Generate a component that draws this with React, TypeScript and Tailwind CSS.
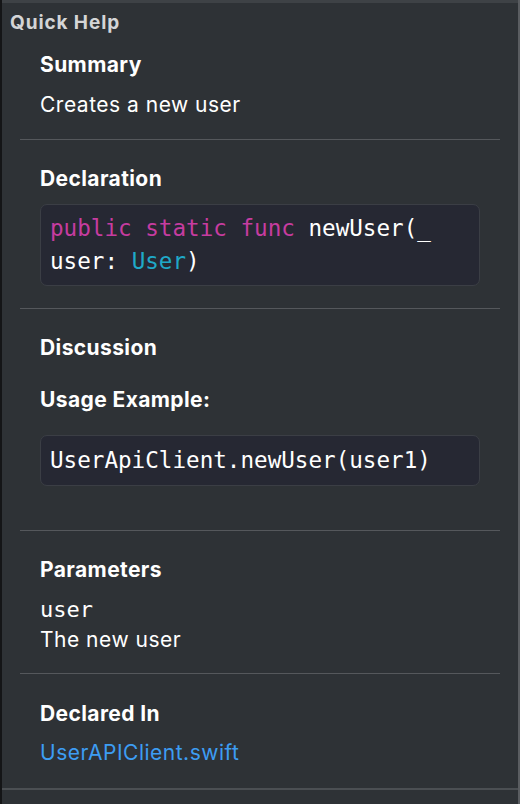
import React from "react";

const sans = "font-['Inter','Liberation_Sans',sans-serif]";
const mono = "font-['DejaVu_Sans_Mono','Liberation_Mono',monospace]";

function Heading({ children, className = "" }: { children: React.ReactNode; className?: string }) {
  return <div className={`text-[21px] leading-[28px] font-bold tracking-[0.4px] text-white ${className}`}>{children}</div>;
}

function Divider({ className = "" }: { className?: string }) {
  return <div className={`mx-[18px] h-px bg-[#55585c] ${className}`} />;
}

export default function App() {
  return (
    <div className={`flex h-[804px] w-[520px] overflow-hidden bg-[#2e3236] ${sans}`}>
      <div className="w-[2px] shrink-0 bg-[#141517]" />
      <div className="flex flex-1 flex-col border-t-[3px] border-[#3e4246]">
        <div className="pl-[8px] pt-[8px] text-[19px] leading-[24px] font-bold tracking-[0.9px] text-[#d4d5d6]">Quick Help</div>

        <div className="pl-[38px] pr-[38px]">
          <Heading className="mt-[16px]">Summary</Heading>
          <div className="mt-[12px] text-[21px] leading-[28px] tracking-[0.5px] text-white">Creates a new user</div>
        </div>
        <Divider className="mt-[20px]" />

        <div className="pl-[38px] pr-[38px]">
          <Heading className="mt-[25px]">Declaration</Heading>
          <div className={`mt-[11px] rounded-[7px] border border-[#3b3e45] bg-[#262833] px-[9px] py-[7px] text-[22.6px] leading-[33px] text-white ${mono}`}>
            <span className="text-[#c63ca0]">public static func</span> newUser(_
            <br />
            user: <span className="text-[#1fa9c8]">User</span>)
          </div>
        </div>
        <Divider className="mt-[22px]" />

        <div className="pl-[38px] pr-[38px]">
          <Heading className="mt-[25px]">Discussion</Heading>
          <Heading className="mt-[24px]">Usage Example:</Heading>
          <div className={`mt-[21px] rounded-[7px] border border-[#3b3e45] bg-[#262833] px-[9px] py-[8px] text-[22.6px] leading-[33px] text-white ${mono}`}>
            UserApiClient.newUser(user1)
          </div>
        </div>
        <Divider className="mt-[44px]" />

        <div className="pl-[38px] pr-[38px]">
          <Heading className="mt-[25px]">Parameters</Heading>
          <div className={`mt-[11px] text-[22px] leading-[30px] text-white ${mono}`}>user</div>
          <div className="text-[21px] leading-[30px] tracking-[0.5px] text-white">The new user</div>
        </div>
        <Divider className="mt-[18px]" />

        <div className="pl-[38px] pr-[38px]">
          <Heading className="mt-[26px]">Declared In</Heading>
          <div className="mt-[11px] text-[21px] leading-[28px] tracking-[0.5px] text-[#3d9df3]">UserAPIClient.swift</div>
        </div>
        <div className="mt-[21px] h-[2px] bg-[#4b4f53]" />
      </div>
      <div className="w-[2px] shrink-0 bg-[#5a5d61]" />
    </div>
  );
}
